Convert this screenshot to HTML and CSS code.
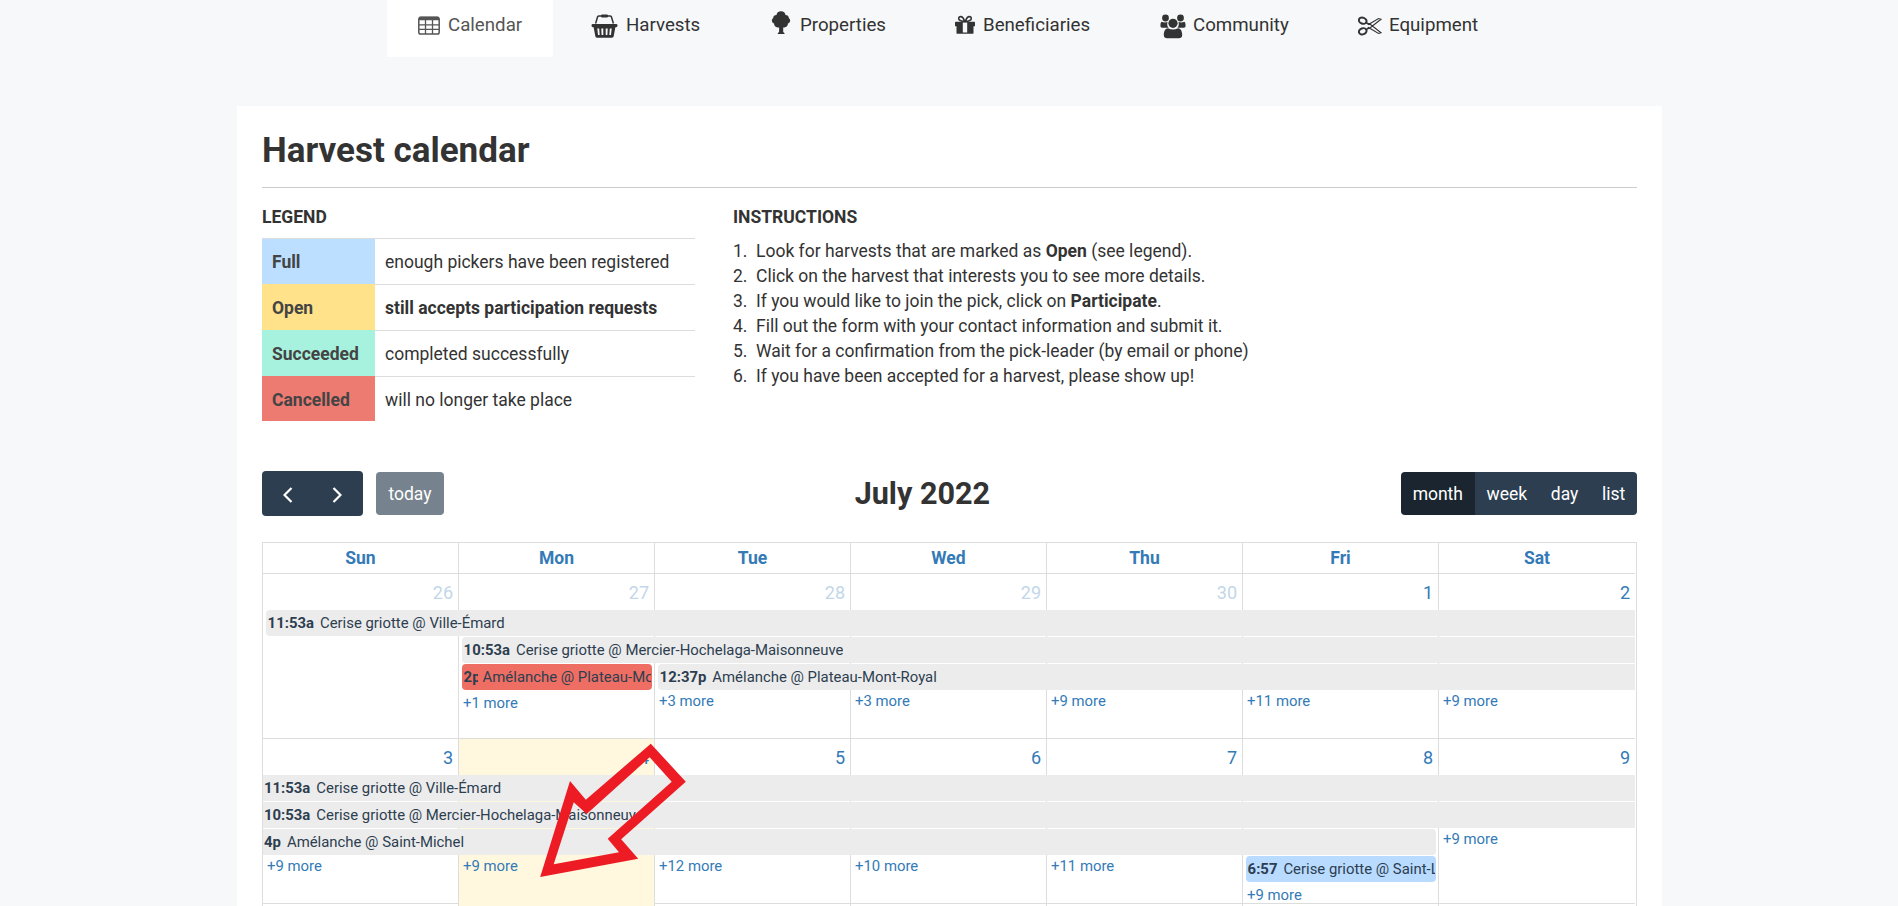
FILE: index.html
```html
<!DOCTYPE html>
<html lang="en">
<head>
<meta charset="utf-8">
<title>Harvest calendar</title>
<link rel="stylesheet" href="styles.css">
</head>
<body>
<nav class="nav">
  <a class="tab tab-calendar active"><svg width="22" height="19" viewBox="0 0 22 19"><rect x="0.8" y="1.500" width="20.400" height="16.500" rx="1.800" fill="none" stroke="currentColor" stroke-width="1.500"/><path d="M1 1.800Q1 .6 2.300.6h17.400Q21 .6 21 1.800v2.400H1z" fill="currentColor"/><path d="M1 8.800h20M1 13.300h20M7.500 4v14M14.500 4v14" stroke="currentColor" stroke-width="1.300" fill="none"/></svg><span>Calendar</span></a>
  <a class="tab tab-harvests"><svg width="27" height="25" viewBox="0 0 27 25"><path d="M4.600 9.500 6.600 2.800Q7 1.900 8 1.900h11q1 0 1.400.9l2 6.700" fill="none" stroke="currentColor" stroke-width="1.500"/><rect x="10" y="0.600" width="7" height="2.800" rx="1.200" fill="currentColor"/><rect x="0.500" y="10" width="26" height="3.200" rx="1.400" fill="currentColor"/><path fill-rule="evenodd" fill="currentColor" d="M2.500 12.500h22l-1.800 9.800q-.3 1.400-1.600 1.400H5.900q-1.300 0-1.600-1.400zM6.300 14.500l.7 6.500h1.700l-.5-6.500zM10.300 14.500l.3 6.500h1.700v-6.500zM14.700 14.500V21h1.700l.3-6.500zM18.800 14.500l-.5 6.500H20l.7-6.500z"/></svg><span>Harvests</span></a>
  <a class="tab tab-properties"><svg width="20" height="24" viewBox="0 0 20 24"><path fill="currentColor" d="M10 .3c2.600 0 4.300 1.600 4.500 3.600 2 .1 3.300 1.200 3.300 3 1 .8 1.600 1.900 1.300 3.200-.3 1.400-1.200 2.200-2.200 2.400.2 2.200-1.500 3.700-3.500 3.900h-1.200v4.400q.2.900 1.300 1.100V23H6.800v-1.100q1.100-.2 1.300-1.100v-4.400H6.600c-2-.2-3.700-1.700-3.500-3.900-1-.2-1.900-1-2.200-2.400-.3-1.300.3-2.400 1.300-3.200 0-1.800 1.300-2.900 3.300-3C5.700 1.900 7.400.3 10 .3z"/></svg><span>Properties</span></a>
  <a class="tab tab-beneficiaries"><svg width="20" height="20" viewBox="0 0 20 20"><path d="M9.700 6.500C8.500 3 7.200 1.600 5.700 1.600 4.200 1.600 3.400 2.800 3.800 4c.5 1.700 2.700 2.300 5.900 2.500zM10.300 6.500c1.200-3.500 2.500-4.900 4-4.900 1.500 0 2.300 1.200 1.900 2.400-.5 1.700-2.700 2.300-5.900 2.500z" fill="none" stroke="currentColor" stroke-width="1.600"/><path fill="currentColor" fill-rule="evenodd" d="M.8 6.700h18.400q.8 0 .8.800v3.700h-1.500v6.700q0 .9-.9.900H2.400q-.9 0-.9-.9v-6.700H0V7.500q0-.8.8-.8zM7.800 7.600v10h4.400v-10z"/></svg><span>Beneficiaries</span></a>
  <a class="tab tab-community"><svg width="26" height="25" viewBox="0 0 26 25"><g fill="currentColor"><circle cx="5.500" cy="4" r="3.400"/><circle cx="20.500" cy="4" r="3.400"/><path d="M1.500 7.700Q4.500 9 7.600 8q-1.200 3.300 1 5.700H2.200Q.4 13.700.4 12 .3 8.700 1.500 7.700zM24.500 7.700Q21.500 9 18.400 8q1.200 3.300-1 5.700h6.400q1.800 0 1.800-1.700.1-3.300-1.100-4.300z"/><circle cx="13" cy="9.300" r="4.600"/><path d="M8 14.200q5 2.600 10 0c2.700 0 4.200 3 4.200 6.800 0 2.100-1.400 3.200-3.300 3.200H7.100c-1.900 0-3.300-1.100-3.300-3.200 0-3.800 1.500-6.800 4.200-6.800z"/></g></svg><span>Community</span></a>
  <a class="tab tab-equipment"><svg width="24" height="20" viewBox="0 0 24 20"><g fill="none" stroke="currentColor"><ellipse cx="4.700" cy="4.700" rx="3.900" ry="3" transform="rotate(20 4.700 4.700)" stroke-width="2"/><ellipse cx="4.700" cy="15.300" rx="3.900" ry="3" transform="rotate(-20 4.700 15.300)" stroke-width="2"/><path d="M8 6.500 10.500 8.500 20.500 2.500 23 3.300 12.500 11.500 8 13.800M8 13.800l2.500-2.300 10 6 2.500-.8L12.500 8.500 8 6.500" stroke-width="1.100"/></g></svg><span>Equipment</span></a>
</nav>

<main class="card">
  <h1>Harvest calendar</h1>
  <div class="intro">
    <section class="legend">
      <h2>LEGEND</h2>
      <dl>
        <div><dt class="full">Full</dt><dd>enough pickers have been registered</dd></div>
        <div><dt class="open">Open</dt><dd><b>still accepts participation requests</b></dd></div>
        <div><dt class="succeeded">Succeeded</dt><dd>completed successfully</dd></div>
        <div><dt class="cancelled">Cancelled</dt><dd>will no longer take place</dd></div>
      </dl>
    </section>
    <section class="instructions">
      <h2>INSTRUCTIONS</h2>
      <ol>
        <li><i>1.</i><span>Look for harvests that are marked as <b>Open</b> (see legend).</span></li>
        <li><i>2.</i><span>Click on the harvest that interests you to see more details.</span></li>
        <li><i>3.</i><span>If you would like to join the pick, click on <b>Participate</b>.</span></li>
        <li><i>4.</i><span>Fill out the form with your contact information and submit it.</span></li>
        <li><i>5.</i><span>Wait for a confirmation from the pick-leader (by email or phone)</span></li>
        <li><i>6.</i><span>If you have been accepted for a harvest, please show up!</span></li>
      </ol>
    </section>
  </div>

  <div class="toolbar">
    <div class="tool-left">
      <div class="arrows">
        <button><svg width="10" height="16" viewBox="0 0 10 16"><path d="M8.500 1 1.500 8l7 7" /></svg></button>
        <button><svg width="10" height="16" viewBox="0 0 10 16"><path d="M1.500 1l7 7-7 7" /></svg></button>
      </div>
      <button class="today">today</button>
    </div>
    <h3>July 2022</h3>
    <div class="views"><button class="on">month</button><button>week</button><button>day</button><button>list</button></div>
  </div>

  <div class="calendar">
    <div class="heads"><span>Sun</span><span>Mon</span><span>Tue</span><span>Wed</span><span>Thu</span><span>Fri</span><span>Sat</span></div>
    <div class="week">
      <div class="day c1 other">26</div><div class="day c2 other">27</div><div class="day c3 other">28</div><div class="day c4 other">29</div><div class="day c5 other">30</div><div class="day c6">1</div><div class="day c7">2</div>
      <div class="event r1 s1 e7 start"><b>11:53a</b><span>Cerise griotte @ Ville-Émard</span></div>
      <div class="event r2 s2 e7 start"><b>10:53a</b><span>Cerise griotte @ Mercier-Hochelaga-Maisonneuve</span></div>
      <div class="event r3 s2 e2 start end red"><b>2p</b><span>Amélanche @ Plateau-Mont-Royal</span></div>
      <div class="event r3 s3 e7 start"><b>12:37p</b><span>Amélanche @ Plateau-Mont-Royal</span></div>
      <a class="more r4 c2 low">+1 more</a><a class="more r4 c3">+3 more</a><a class="more r4 c4">+3 more</a><a class="more r4 c5">+9 more</a><a class="more r4 c6">+11 more</a><a class="more r4 c7">+9 more</a>
    </div>
    <div class="week">
      <div class="day c1">3</div><div class="day c2 current">4</div><div class="day c3">5</div><div class="day c4">6</div><div class="day c5">7</div><div class="day c6">8</div><div class="day c7">9</div>
      <div class="event r1 s1 e7"><b>11:53a</b><span>Cerise griotte @ Ville-Émard</span></div>
      <div class="event r2 s1 e7"><b>10:53a</b><span>Cerise griotte @ Mercier-Hochelaga-Maisonneuve</span></div>
      <div class="event r3 s1 e6 end"><b>4p</b><span>Amélanche @ Saint-Michel</span></div>
      <div class="event r4 s6 e6 start end blue"><b>6:57</b><span>Cerise griotte @ Saint-Laurent</span></div>
      <a class="more r3 c7">+9 more</a>
      <a class="more r4 c1">+9 more</a><a class="more r4 c2">+9 more</a><a class="more r4 c3">+12 more</a><a class="more r4 c4">+10 more</a><a class="more r4 c5">+11 more</a><a class="more r5 c6 low">+9 more</a>
    </div>
    <div class="week">
      <div class="day c1"></div><div class="day c2"></div><div class="day c3"></div><div class="day c4"></div><div class="day c5"></div><div class="day c6"></div><div class="day c7"></div>
    </div>
  </div>
</main>

<svg class="pointer" width="150" height="138" viewBox="538 742 150 138"><path fill="#ed1c24" fill-rule="evenodd" d="M540.200 877 570 781l15.800 18.700 65-56 35 38-64.600 57.600 17 19.400zM553.700 864.300l65.300-12-11.300-13.600 64-57-22-24.400-63 56.700-13-11.700z"/></svg>
</body>
</html>
```
FILE: styles.css
```css
* { box-sizing: border-box; }
body {
  margin: 0;
  height: 906px;
  overflow: hidden;
  position: relative;
  background: #f7f8fa;
  color: #333;
  font: 17.5px/25px Roboto, sans-serif;
}
h1, h2, h3, dl, dd, ol { margin: 0; padding: 0; }
button { border: 0; padding: 0; font: inherit; color: #fff; background: #2c3e50; }

.nav { display: flex; height: 57px; padding-left: 387px; font-size: 18.7px; }
.tab { display: flex; align-items: center; height: 57px; padding-bottom: 6px; white-space: nowrap; }
.tab svg { flex: none; margin: -1px 8px 0 0; }
.tab-calendar { width: 166px; padding-left: 31px; }
.tab-harvests { width: 180px; padding-left: 38px; }
.tab-properties { width: 185px; padding-left: 38px; }
.tab-beneficiaries { width: 204px; padding-left: 37px; }
.tab-community { width: 198px; padding-left: 38px; }
.tab-equipment { padding-left: 38px; }
.tab.tab-properties svg { margin: -6px 9px 0 0; }
.tab.tab-harvests svg { margin-top: 1px; }
.tab.tab-community svg { margin: 1px 7px 0 0; }
.tab.tab-equipment svg { margin: 1px 7px 0 0; }
.active { background: #fff; color: #555; }

.card { width: 1425px; height: 800px; margin: 49px 0 0 237px; padding: 0 25px; background: #fff; overflow: hidden; }
h1 { height: 82px; padding-top: 25px; border-bottom: 1px solid #ccc; font-size: 35px; line-height: 39px; font-weight: 700; }
h2 { font-size: 17.5px; line-height: 25px; font-weight: 700; }

.intro { display: flex; gap: 38px; height: 283px; padding-top: 17px; }
.legend { width: 433px; }
.legend dl { margin-top: 8px; }
.legend dl div { display: flex; height: 46px; border-top: 1px solid #ddd; }
dt { width: 113px; margin-top: -1px; padding: 12px 10px 0; font-weight: 700; color: #444; }
.legend dl div:first-child dt { margin-top: 0; padding-top: 11px; }
.legend dl div:last-child { height: 45px; }
dd { padding: 11px 10px 0; }
.full { background: #bddfff; }
.open { background: #ffe28a; }
.succeeded { background: #a7f2de; }
.cancelled { background: #ee7b72; }
.instructions ol { margin-top: 9px; list-style: none; }
.instructions li { display: flex; }
.instructions i { flex: none; width: 23px; font-style: normal; }

.toolbar { display: flex; justify-content: space-between; align-items: center; height: 45px; margin-bottom: 26px; }
.tool-left { display: flex; align-items: center; gap: 13px; }
.arrows { display: flex; width: 101px; height: 45px; border-radius: 4px; overflow: hidden; }
.arrows button { flex: 1; display: flex; align-items: center; justify-content: center; padding: 3px 0 0 1px; }
.arrows button + button { padding: 3px 1px 0 0; }
.arrows path { fill: none; stroke: #fff; stroke-width: 2.2; }
.today { width: 68px; height: 43px; padding-top: 1px; border-radius: 4px; background: #76828d; }
h3 { padding-top: 1px; font-size: 30.6px; line-height: 36px; font-weight: 700; }
.views { display: flex; height: 43px; border-radius: 4px; overflow: hidden; }
.views button { padding: 1px 11.8px 0; }
.views .on { background: #1a252f; }

.calendar { border: 1px solid #ddd; border-bottom: 0; padding-right: 1px; }
.heads, .week { display: grid; grid-template-columns: 195px repeat(5, 196px) 197px; }
.heads { height: 30px; color: #337ab7; font-weight: 700; text-align: center; line-height: 30px; }
.heads span + span, .c2.day, .c3.day, .c4.day, .c5.day, .c6.day, .c7.day { border-left: 1px solid #ddd; }
.week { height: 165px; border-top: 1px solid #ddd; grid-template-rows: 36px repeat(4, 27px) 1fr; }
.day { grid-row: 1 / -1; padding: 6px 5px 0 0; text-align: right; color: #337ab7; font-size: 18px; }
.other { color: #c2d7e9; }
.current { background: #fff8df; }
.c1 { grid-column: 1; } .c2 { grid-column: 2; } .c3 { grid-column: 3; } .c4 { grid-column: 4; }
.c5 { grid-column: 5; } .c6 { grid-column: 6; } .c7 { grid-column: 7; }
.r1 { grid-row: 2; } .r2 { grid-row: 3; } .r3 { grid-row: 4; } .r4 { grid-row: 5; } .r5 { grid-row: 6; }
.s1 { grid-column-start: 1; } .s2 { grid-column-start: 2; } .s3 { grid-column-start: 3; } .s6 { grid-column-start: 6; }
.e2 { grid-column-end: 3; } .e6 { grid-column-end: 7; } .e7 { grid-column-end: 8; }
.event {
  display: flex;
  height: 26px;
  padding-left: 1px;
  background: #ececec;
  color: #2c3e50;
  font-size: 14.9px;
  line-height: 26px;
  white-space: nowrap;
  overflow: hidden;
}
.event b { flex: none; margin-right: 6px; }
.event span { overflow: hidden; }
.start { margin-left: 4px; padding-left: 1.6px; border-radius: 4px 0 0 4px; }
.week .s1.start { margin-left: 3px; }
.end { margin-right: 2px; border-radius: 0 4px 4px 0; }
.start.end { border-radius: 4px; padding-right: 1px; }
.red { background: #ee6e63; }
.red b { width: 14px; overflow: hidden; margin-right: 5px; }
.blue { background: #b8dbff; }
.more { padding-left: 5px; color: #337ab7; font-size: 14.9px; line-height: 21px; }
.c1.more { padding-left: 4px; }
.low { padding-top: 2px; }

.pointer { position: absolute; left: 538px; top: 742px; }
```
